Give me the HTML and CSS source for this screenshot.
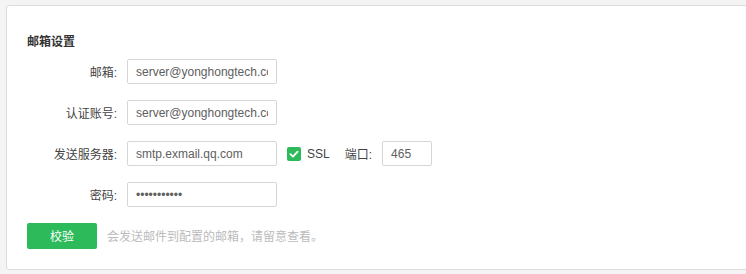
FILE: index.html
```html
<!DOCTYPE html>
<html lang="zh">
<head>
<meta charset="utf-8">
<link rel="stylesheet" href="styles.css">
</head>
<body>
<div class="panel">
  <div class="title">邮箱设置</div>
  <div class="row">
    <label class="label">邮箱:</label>
    <input class="input" type="text" value="server@yonghongtech.com">
  </div>
  <div class="row">
    <label class="label">认证账号:</label>
    <input class="input" type="text" value="server@yonghongtech.com">
  </div>
  <div class="row">
    <label class="label">发送服务器:</label>
    <input class="input" type="text" value="smtp.exmail.qq.com">
    <span class="check">
      <svg width="14" height="14" viewBox="0 0 14 14"><rect width="14" height="14" rx="2" fill="#2dba5b"/><path d="M3.4 7.2 L6 9.6 L10.6 4.6" fill="none" stroke="#fff" stroke-width="1.8" stroke-linecap="round" stroke-linejoin="round"/></svg>
    </span>
    <span class="ssl">SSL</span>
    <label class="port-label">端口:</label>
    <input class="input port" type="text" value="465">
  </div>
  <div class="row">
    <label class="label">密码:</label>
    <input class="input" type="password" value="abcdefghijk">
  </div>
  <div class="row">
    <button class="btn">校验</button>
    <span class="hint">会发送邮件到配置的邮箱，请留意查看。</span>
  </div>
</div>
</body>
</html>
```
FILE: styles.css
```css
html, body {
  margin: 0;
  padding: 0;
  background: #f4f4f4;
  overflow: hidden;
}
body {
  padding: 5px 0 0 6px;
  font-family: "Liberation Sans", "Noto Sans CJK SC", sans-serif;
  font-size: 12px;
  color: #333;
}
.panel {
  background: #fff;
  border: 1px solid #dcdcdc;
  border-radius: 3px;
  width: 760px;
  height: 265px;
  box-sizing: border-box;
  padding: 28px 20px 0 20px;
}
.title {
  font-weight: bold;
  line-height: 17px;
  color: #333;
  margin-bottom: 8px;
}
.row {
  display: flex;
  align-items: center;
  height: 25px;
  margin-bottom: 16px;
}
.label {
  width: 90px;
  text-align: right;
  margin-right: 10px;
  color: #444;
}
.input {
  width: 150px;
  height: 25px;
  box-sizing: border-box;
  border: 1px solid #d6d6d6;
  border-radius: 2px;
  padding: 0 8px;
  font-family: "Liberation Sans", "Noto Sans CJK SC", sans-serif;
  font-size: 12px;
  color: #606060;
  outline: none;
}
.input.port {
  width: 50px;
}
.check {
  display: flex;
  margin-left: 10px;
  margin-right: 6px;
}
.ssl {
  color: #444;
  margin-right: 15px;
}
.port-label {
  color: #444;
  margin-right: 10px;
}
.btn {
  width: 70px;
  height: 26px;
  border: none;
  border-radius: 2px;
  background: #2dba5b;
  color: #fff;
  font-family: "Liberation Sans", "Noto Sans CJK SC", sans-serif;
  font-size: 12px;
  padding: 0;
  margin-right: 10px;
}
.hint {
  color: #bbb;
}
```
